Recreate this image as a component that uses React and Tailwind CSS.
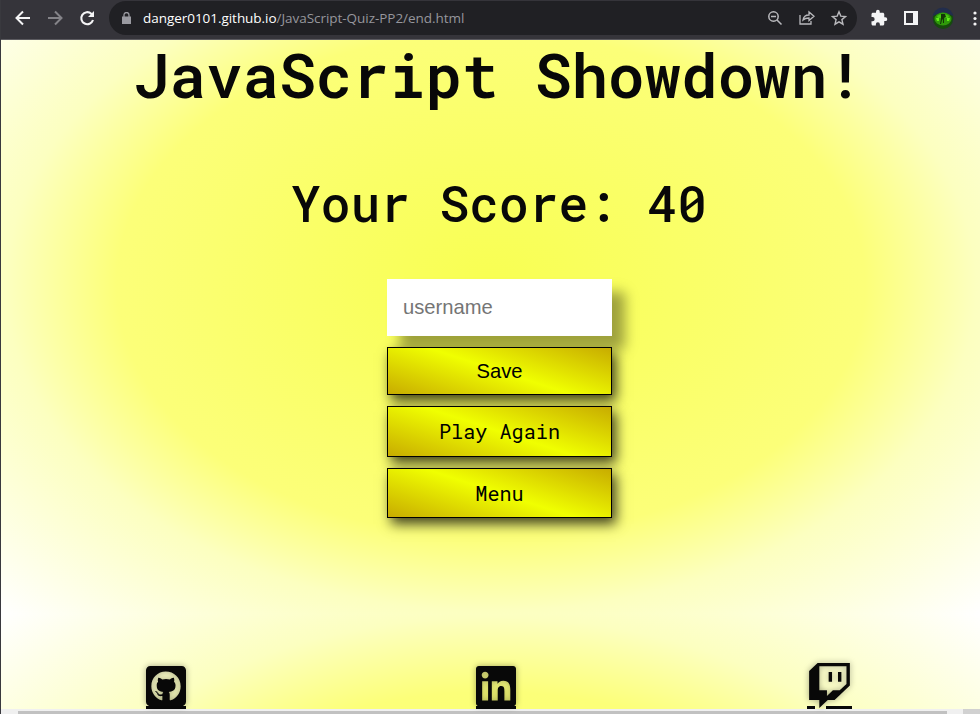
import { FaGithubSquare, FaLinkedin, FaTwitch } from "react-icons/fa";

const mono = "font-['Roboto_Mono','DejaVu_Sans_Mono',monospace]";
const buttonBase =
  "w-[225px] border border-black bg-[linear-gradient(18deg,#c8ac00_0%,#f0ff00_50%,#c8ac00_100%)] text-center text-black shadow-[4px_6px_12px_0px_rgba(0,0,0,0.75)]";

function Toolbar() {
  return (
    <header className="flex h-10 shrink-0 items-start border-b border-[#5c5b60] bg-[#35343a] font-['Open_Sans','Noto_Sans',sans-serif]">
      <svg className="mt-[9px] ml-[13px] h-[18px] w-[18px] shrink-0" viewBox="0 0 18 18" fill="none" stroke="#f4f4f5" strokeWidth="2">
        <path d="M16 9H3M9 2.500 2.500 9 9 15.500" />
      </svg>
      <svg className="mt-[9px] ml-[14px] h-[18px] w-[18px] shrink-0" viewBox="0 0 18 18" fill="none" stroke="#848388" strokeWidth="2">
        <path d="M2 9h13M9 2.500 15.500 9 9 15.500" />
      </svg>
      <svg className="mt-[9px] ml-[14px] h-[18px] w-[18px] shrink-0" viewBox="0 0 18 18" fill="none" stroke="#f4f4f5" strokeWidth="2.100">
        <path d="M15 11A6 6 0 1 1 13.300 4.700L15 6.500" />
        <path d="M16 2v6h-6z" fill="#f4f4f5" stroke="none" />
      </svg>
      <div className="mt-px ml-[13px] flex h-[34px] w-[748px] shrink-0 items-center rounded-full bg-[#202024] pl-[13px]">
        <svg className="h-3 w-[9px]" viewBox="0 0 9 12">
          <path d="M0 4.500h9V12H0z" fill="#9a9aa1" />
          <path d="M2 5V3a2.500 2.500 0 0 1 5 0v2" fill="none" stroke="#9a9aa1" strokeWidth="1.300" />
        </svg>
        <p className="mt-px ml-3 w-[322px] text-[13.5px] leading-none tracking-[-0.04px] whitespace-nowrap text-[#96969c]">
          <span className="text-white">danger0101.github.io</span>/JavaScript-Quiz-PP2/end.html
        </p>
        <div className="ml-auto flex items-center gap-4 pr-[10px] text-[#b9b9bd]">
          <svg className="h-4 w-4" viewBox="0 0 16 16" fill="none" stroke="currentColor" strokeWidth="1.500">
            <circle cx="6.500" cy="6.500" r="4.700" />
            <path d="m10 10 4.500 4.500M4 6.500h5" />
          </svg>
          <svg className="h-4 w-4" viewBox="0 0 16 16" fill="none" stroke="currentColor" strokeWidth="1.300">
            <path d="M1 5v9h11v-3M4 10c.5-3.500 2.500-5 6-5V2l5 4.300-5 4.200V8C7.500 8 5.500 8.500 4 10Z" />
          </svg>
          <svg className="h-4 w-4" viewBox="0 0 16 16" fill="none" stroke="currentColor" strokeWidth="1.400">
            <path d="m8 1.800 1.800 4.300 4.700.4-3.600 3.100 1.100 4.600L8 11.800l-4 2.400 1.100-4.600-3.600-3.100 4.700-.4Z" />
          </svg>
        </div>
      </div>
      <svg className="mt-[9px] ml-[13px] h-[18px] w-[18px] shrink-0" viewBox="0 0 24 24" fill="#f4f4f5">
        <path d="M20.500 11H19V7c0-1.100-.9-2-2-2h-4V3.500a2.500 2.500 0 0 0-5 0V5H4c-1.100 0-2 .9-2 2v3.800h1.500a2.700 2.700 0 0 1 0 5.400H2V20c0 1.100.9 2 2 2h3.800v-1.500a2.700 2.700 0 0 1 5.400 0V22H17c1.100 0 2-.9 2-2v-4h1.500a2.500 2.500 0 0 0 0-5z" />
      </svg>
      <div className="mt-[11px] ml-4 h-[14px] w-[14px] shrink-0 border-y-2 border-r-[5px] border-l-2 border-[#f4f4f5]" />
      <svg className="mt-[7px] ml-[14px] h-[22px] w-[22px] shrink-0" viewBox="0 0 22 22">
        <circle cx="11" cy="11" r="10.500" fill="#222d4c" />
        <path d="M1 9q10-6 20 0v3a10 10 0 0 1-20 0z" fill="#174b0c" />
        <ellipse cx="11" cy="12" rx="8.500" ry="6.500" fill="#2f9a0a" />
        <path d="M5 9q6-4 12 0l-1 2H6z" fill="#49c912" />
        <path d="M9 7h4l1 3-2 1v5h-1v-4l-1 1-1 4H8l1-5z" fill="#143507" />
        <path d="M4 11h3v3H5zm11 0h3l-1 3h-2z" fill="#60ed16" />
      </svg>
      <svg className="mt-[11px] ml-[19px] h-[15px] w-1 shrink-0" viewBox="0 0 4 15" fill="#f4f4f5">
        <circle cx="2" cy="2" r="1.600" />
        <circle cx="2" cy="7.500" r="1.600" />
        <circle cx="2" cy="13" r="1.600" />
      </svg>
    </header>
  );
}

function SocialLinks() {
  const glow = "drop-shadow-[0_0_3px_rgba(0,0,0,0.35)]";
  return (
    <footer className="mt-auto flex h-[49px] pl-[144px] text-[#080808]">
      <a className="flex w-[330px] flex-col">
        <FaGithubSquare className={`mt-[3px] ml-px h-[46px] w-10 shrink-0 ${glow}`} preserveAspectRatio="none" />
        <span className="-mt-[3px] ml-px h-[3px] w-10 shrink-0 bg-[#080808]" />
      </a>
      <a className="flex w-[331px] flex-col">
        <FaLinkedin className={`mt-[3px] ml-px h-[46px] w-10 shrink-0 ${glow}`} preserveAspectRatio="none" />
        <span className="-mt-[3px] ml-px h-[3px] w-10 shrink-0 bg-[#080808]" />
      </a>
      <a className="flex w-[46px] flex-col">
        <FaTwitch className={`mt-[3px] ml-px size-[45px] shrink-0 ${glow}`} />
        <span className="-mt-[2px] ml-px flex h-[3px] shrink-0 justify-between">
          <span className="h-[3px] w-2 bg-[#080808]" />
          <span className="h-[3px] w-[26px] bg-[#080808]" />
        </span>
      </a>
    </footer>
  );
}

export default function App() {
  return (
    <div className="flex h-[714px] w-[980px] flex-col overflow-hidden border-l border-[#39393e] bg-[radial-gradient(ellipse_at_center,#f8ff52_0%,#fcff79_54%,#fcffc0_70%,#ffffff_100%)] bg-[length:980px_658px] bg-[position:0px_-44px]">
      <Toolbar />
      <main className="flex min-h-0 flex-1 flex-col items-center text-[#080808]">
        <h1 className={`-mt-px ml-[16px] h-[72px] text-[60.9px] leading-[72px] font-[560] whitespace-nowrap ${mono}`}>
          JavaScript Showdown!
        </h1>
        <h2 className={`mt-[62px] ml-[17px] h-[60px] text-[49.5px] leading-[60px] font-[550] whitespace-nowrap ${mono}`}>
          Your Score: 40
        </h2>
        <form className="mt-[46px] ml-[18px] flex w-[225px] flex-col gap-[11px]">
          <input
            type="text"
            placeholder="username"
            className="h-[57px] w-[225px] bg-white px-4 font-['Liberation_Sans',Arial,sans-serif] text-[20.2px] shadow-[13px_13px_12px_0px_rgba(0,0,0,0.37)] placeholder:text-[#757575]"
          />
          <button type="button" className={`h-12 font-['Liberation_Sans',Arial,sans-serif] text-[20.2px] ${buttonBase}`}>Save</button>
          <button type="button" className={`h-[51px] text-[20.2px] ${mono} ${buttonBase}`}>Play Again</button>
          <button type="button" className={`h-[50px] text-[20.2px] ${mono} ${buttonBase}`}>Menu</button>
        </form>
        <div className="mt-auto w-full">
          <SocialLinks />
        </div>
      </main>
      <div className="flex h-[5px] shrink-0 bg-[#f0f0f0]">
        <div className="mt-[2px] ml-[17px] h-[3px] w-[929px] bg-[#c1c1c1]" />
        <div className="ml-auto h-[5px] w-[17px] bg-[#d1d1d1]" />
      </div>
    </div>
  );
}
